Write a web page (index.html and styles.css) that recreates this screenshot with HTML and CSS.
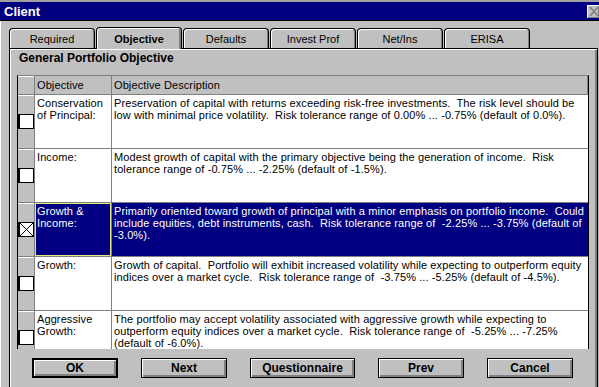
FILE: index.html
```html
<!DOCTYPE html>
<html lang="en">
<head>
    <meta charset="UTF-8">
    <title>Client</title>
    <link rel="stylesheet" href="styles.css">
</head>
<body>
    <div class="desk-strip"></div>
    <div class="titlebar">
        <div class="title">Client</div>
        <div class="close-btn">
            <svg width="10" height="9" viewBox="0 0 10 9"><path d="M1 0 L9 9 M9 0 L1 9" stroke="#808080" stroke-width="1.6"/></svg>
        </div>
    </div>

    <div class="client">
        <div class="tabs">
            <div class="tab">Required</div>
            <div class="tab active">Objective</div>
            <div class="tab">Defaults</div>
            <div class="tab">Invest Prof</div>
            <div class="tab">Net/Ins</div>
            <div class="tab">ERISA</div>
        </div>

        <div class="panel">
            <div class="panel-title">General Portfolio Objective</div>

            <div class="grid">
                <div class="row head">
                    <div class="sel"></div>
                    <div class="cell">Objective</div>
                    <div class="cell">Objective Description</div>
                </div>
                <div class="row">
                    <div class="sel"><span class="check"></span></div>
                    <div class="cell">Conservation<br>of Principal:</div>
                    <div class="cell desc">Preservation of capital with returns exceeding risk-free investments.  The risk level should be<br>low with minimal price volatility.  Risk tolerance range of 0.00% ... -0.75% (default of 0.0%).</div>
                </div>
                <div class="row">
                    <div class="sel"><span class="check"></span></div>
                    <div class="cell">Income:</div>
                    <div class="cell desc">Modest growth of capital with the primary objective being the generation of income.  Risk<br>tolerance range of -0.75% ... -2.25% (default of -1.5%).</div>
                </div>
                <div class="row picked">
                    <div class="sel">
                        <span class="check">
                            <svg width="13" height="13" viewBox="0 0 13 13"><path d="M0 0 L13 13 M13 0 L0 13" stroke="#000" stroke-width="1"/></svg>
                        </span>
                    </div>
                    <div class="cell focus">Growth &amp;<br>Income:</div>
                    <div class="cell desc">Primarily oriented toward growth of principal with a minor emphasis on portfolio income.  Could<br>include equities, debt instruments, cash.  Risk tolerance range of  -2.25% ... -3.75% (default of<br>-3.0%).</div>
                </div>
                <div class="row">
                    <div class="sel"><span class="check"></span></div>
                    <div class="cell">Growth:</div>
                    <div class="cell desc">Growth of capital.  Portfolio will exhibit increased volatility while expecting to outperform equity<br>indices over a market cycle.  Risk tolerance range of  -3.75% ... -5.25% (default of -4.5%).</div>
                </div>
                <div class="row">
                    <div class="sel"><span class="check"></span></div>
                    <div class="cell">Aggressive<br>Growth:</div>
                    <div class="cell desc">The portfolio may accept volatility associated with aggressive growth while expecting to<br>outperform equity indices over a market cycle.  Risk tolerance range of  -5.25% ... -7.25%<br>(default of -6.0%).</div>
                </div>
            </div>

            <div class="buttons">
                <div class="btn default">OK</div>
                <div class="btn">Next</div>
                <div class="btn wide">Questionnaire</div>
                <div class="btn">Prev</div>
                <div class="btn">Cancel</div>
            </div>
        </div>
    </div>
</body>
</html>
```

FILE: styles.css
```css
body {
    margin: 0;
    width: 599px;
    height: 387px;
    overflow: hidden;
    background: #c0c0c0;
    font-family: 'Liberation Sans', Arial, sans-serif;
    font-size: 11px;
    color: #000;
}
.desk-strip {
    height: 2px;
    background: #a0a0a0;
}
.titlebar {
    height: 18px;
    background: #000080;
    border-bottom: 1px solid #000;
    display: flex;
    justify-content: space-between;
    align-items: center;
    padding-left: 4px;
}
.title {
    color: #fff;
    font-weight: bold;
    font-size: 13px;
}
.close-btn {
    width: 11px;
    height: 13px;
    background: #c0c0c0;
    box-shadow: inset 1px 1px #fff, inset -1px -1px #808080;
    display: flex;
    align-items: center;
    justify-content: center;
    padding-left: 1px;
}
.client {
    padding: 6px 1px 0 8px;
    border-left: 1px solid #fff;
    height: 366px;
    display: flex;
    flex-direction: column;
}
.tabs {
    display: flex;
    align-items: flex-end;
    height: 21px;
    position: relative;
    z-index: 1;
}
.tab {
    width: 84px;
    height: 19px;
    border: 1px solid #000;
    border-bottom: none;
    border-radius: 4px 4px 0 0;
    box-shadow: inset 1px 1px #fff, inset -1px 0 #808080;
    display: flex;
    align-items: center;
    justify-content: center;
    margin-right: 1px;
}
.tab.active {
    height: 21px;
    margin-bottom: -1px;
    font-weight: bold;
    background: #c0c0c0;
    box-shadow: inset 1px 1px #fff, inset -2px 0 #808080;
}
.panel {
    flex: 1;
    border: 1px solid #000;
    box-shadow: inset 1px 1px #fff, inset -2px -2px #808080;
    display: flex;
    flex-direction: column;
}
.panel-title {
    font-weight: bold;
    font-size: 12px;
    height: 26px;
    line-height: 19px;
    padding-left: 9px;
}
.grid {
    margin-left: 7px;
    width: 570px;
    height: 273px;
    overflow: hidden;
    border-top: 1px solid #808080;
    border-right: 1px solid #000;
    border-left: 1px solid #000;
    background: #fff;
}
.row {
    display: grid;
    grid-template-columns: 17px 77px 1fr;
    box-sizing: border-box;
    height: 54px;
    border-bottom: 1px solid #808080;
}
.row.head {
    height: 19px;
    background: #c0c0c0;
}
.row.head .cell {
    line-height: 16px;
    padding-top: 1px;
}
.sel {
    background: #c0c0c0;
    border-right: 1px solid #808080;
    box-shadow: inset 0 1px #fff;
    display: flex;
    align-items: center;
}
.cell {
    padding: 2px 0 0 2px;
    line-height: 12px;
    letter-spacing: 0.1px;
    border-right: 1px solid #808080;
    white-space: nowrap;
}
.cell.desc {
    white-space: pre;
    border-right: none;
}
.check {
    width: 13px;
    height: 13px;
    background: #fff;
    border: 1px solid #000;
    border-left-width: 2px;
    display: block;
}
.check svg {
    display: block;
}
.row.picked .cell {
    background: #000080;
    color: #fff;
}
.row.picked .cell.focus {
    box-shadow: inset 0 0 0 1px #e8e878;
}
.buttons {
    display: flex;
    justify-content: space-between;
    padding: 9px 24px 0 22px;
}
.btn {
    width: 84px;
    height: 18px;
    border: 1px solid #000;
    box-shadow: inset 1px 1px #fff, inset -2px -2px #808080;
    display: flex;
    align-items: center;
    justify-content: center;
    font-weight: bold;
    font-size: 12px;
}
.btn.wide {
    width: 103px;
}
.btn.default {
    border-width: 2px;
    width: 82px;
    height: 16px;
}
```
